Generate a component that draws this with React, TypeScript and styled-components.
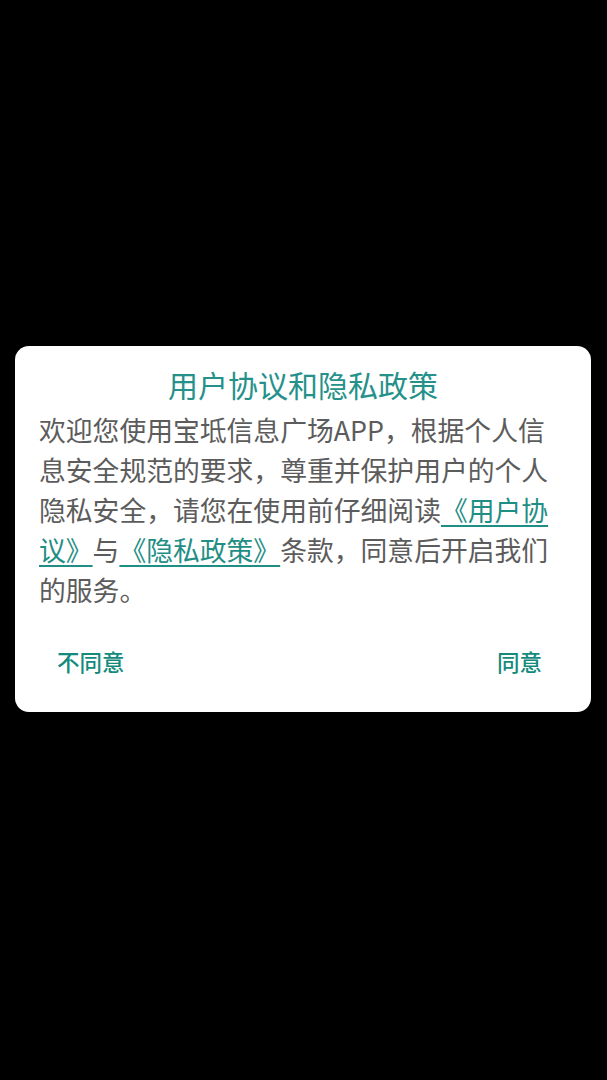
import { createGlobalStyle, styled } from "styled-components";

const GlobalStyle = createGlobalStyle`
  html, body {
    margin: 0;
    padding: 0;
    background: #000;
  }
  body {
    font-family: "Noto Sans CJK SC", "Noto Sans", sans-serif;
  }
`;

const Screen = styled.div`
  width: 607px;
  height: 1080px;
  box-sizing: border-box;
  padding: 346px 16px 0 15px;
  background: #000;
`;

const Dialog = styled.div`
  width: 576px;
  box-sizing: border-box;
  background: #fff;
  border-radius: 14px;
  padding: 18px 0 27px;
  display: flex;
  flex-direction: column;
`;

const Title = styled.h2`
  margin: 0;
  font-size: 30px;
  line-height: 40px;
  font-weight: 400;
  color: #25918a;
  text-align: center;
`;

const Message = styled.p`
  margin: 6px 0 0;
  padding: 0 24px;
  font-size: 26.8px;
  line-height: 40px;
  color: #5c5c5c;
`;

const Link = styled.a`
  color: #1f8e85;
  text-decoration: underline;
  text-underline-offset: 4px;
  text-decoration-thickness: 1.5px;
  cursor: pointer;
`;

const Actions = styled.div`
  margin-top: 27px;
  padding: 0 33px 0 26px;
  display: flex;
  justify-content: space-between;
  align-items: center;
`;

const ActionButton = styled.button`
  height: 48px;
  padding: 0 16px;
  border: none;
  background: transparent;
  font-family: "Noto Sans CJK SC", sans-serif;
  font-size: 22.5px;
  font-weight: 500;
  color: #148a7c;
  cursor: pointer;
`;

const App = (): JSX.Element => {
  return (
    <>
      <GlobalStyle />
      <Screen>
        <Dialog>
          <Title>用户协议和隐私政策</Title>
          <Message>
            欢迎您使用宝坻信息广场APP，根据个人信息安全规范的要求，尊重并保护用户的个人隐私安全，请您在使用前仔细阅读
            <Link>《用户协议》</Link>与<Link>《隐私政策》</Link>
            条款，同意后开启我们的服务。
          </Message>
          <Actions>
            <ActionButton>不同意</ActionButton>
            <ActionButton>同意</ActionButton>
          </Actions>
        </Dialog>
      </Screen>
    </>
  );
};

export default App;
